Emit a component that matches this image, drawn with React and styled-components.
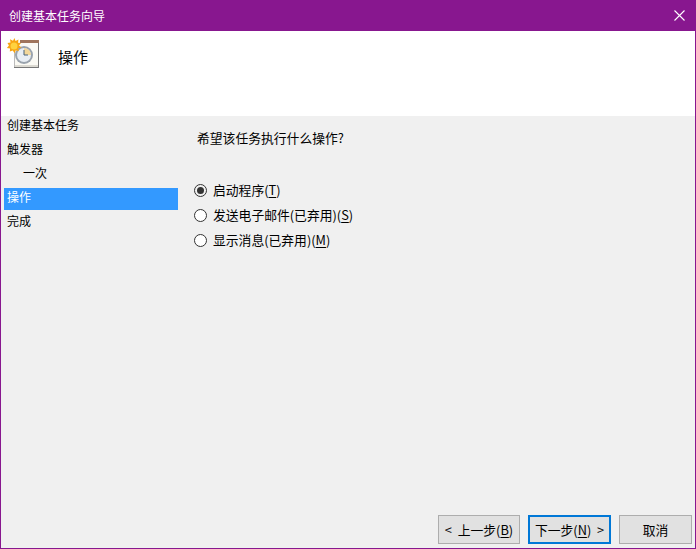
import React, { useState } from 'react';
import styled, { createGlobalStyle } from 'styled-components';

const GlobalStyle = createGlobalStyle`
  html, body {
    margin: 0;
    padding: 0;
    background: #f0f0f0;
  }
  * {
    box-sizing: border-box;
  }
`;

const Window = styled.div`
  display: flex;
  flex-direction: column;
  width: 696px;
  height: 549px;
  border: 1px solid #88178f;
  border-top: none;
  background: #f0f0f0;
  color: #000;
  font-family: 'Noto Sans CJK SC', 'Liberation Sans', sans-serif;
  font-size: 12px;
  overflow: hidden;
`;

const TitleBar = styled.div`
  display: flex;
  align-items: center;
  justify-content: space-between;
  flex: none;
  height: 31px;
  margin: 0 -1px;
  padding: 0 11px 1px 9px;
  background: #88178f;
  color: #fff;
`;

const CloseButton = styled.button`
  display: flex;
  padding: 0;
  border: none;
  background: none;
`;

const Header = styled.div`
  display: flex;
  align-items: flex-start;
  flex: none;
  height: 85px;
  padding: 7px 0 0 5px;
  background: #fff;
`;

const HeaderTitle = styled.div`
  margin: 8px 0 0 19px;
  font-size: 15px;
  line-height: 22px;
`;

const Content = styled.div`
  display: flex;
  flex: 1;
  min-height: 0;
`;

const Nav = styled.nav`
  display: flex;
  flex-direction: column;
  gap: 2px;
  flex: none;
  width: 177px;
  padding-left: 3px;
`;

const NavItem = styled.div`
  height: 22px;
  padding-left: ${(p) => (p.$indent ? 19 : 3)}px;
  background: ${(p) => (p.$active ? '#3399ff' : 'transparent')};
  color: ${(p) => (p.$active ? '#fff' : '#000')};
  line-height: 17px;
`;

const Main = styled.main`
  display: flex;
  flex-direction: column;
  flex: 1;
  min-width: 0;
  padding: 13px 3px 4px 16px;
  font-size: 12.8px;
`;

const Question = styled.div`
  margin-left: 3px;
  line-height: 18px;
`;

const RadioGroup = styled.div`
  display: flex;
  flex-direction: column;
  gap: 7px;
  margin-top: 33px;
`;

const RadioRow = styled.label`
  display: flex;
  align-items: center;
  gap: 6px;
  height: 18px;
`;

const RadioInput = styled.input`
  appearance: none;
  display: grid;
  place-items: center;
  flex: none;
  width: 13px;
  height: 13px;
  margin: 2px 0 0;
  border: 1px solid #333;
  border-radius: 50%;
  background: #fff;

  &:checked {
    background: #f0f0f0;
  }
  &:checked::before {
    content: '';
    width: 7px;
    height: 7px;
    border-radius: 50%;
    background: #333;
  }
`;

const Key = styled.span`
  text-decoration: underline;
  text-underline-offset: 2px;
`;

const Footer = styled.div`
  display: flex;
  justify-content: flex-end;
  margin-top: auto;
`;

const Button = styled.button`
  flex: none;
  width: ${(p) => p.$width}px;
  height: 29px;
  margin-left: ${(p) => p.$gap || 0}px;
  padding: 0;
  border: ${(p) => (p.$primary ? '2px solid #0078d7' : '1px solid #adadad')};
  background: #e1e1e1;
  color: #000;
  font: inherit;
  white-space: pre;
`;

const TaskIcon = () => (
  <svg width="33" height="32" viewBox="0 0 33 32">
    <path d="M8 3h25v25H8z" fill="#fbfaf4" />
    <path d="M14 2h19v3H14z" fill="#a0755c" />
    <path d="M32 5h1v25H8v-1h24z" fill="#777" />
    <path d="M8 5h1v24H8z" fill="#bbb" />
    <path d="M9 27h23v2H9z" fill="#dcdad2" />
    <circle cx="18" cy="17" r="9" fill="#9aa3ad" />
    <circle cx="18" cy="17" r="7" fill="#e8eef4" />
    <path d="M18 10a7 7 0 0 1 7 7h-7z" fill="#f2d79a" />
    <path d="M18 12v5h4" fill="none" stroke="#47627c" strokeWidth="1" />
    <path
      d="M8.500 0l1 3L12.500 1.500 12 4.700l3 .3-2 2.500 2.500 2-3.200.7.500 3-3-1-1.300 3-1.700-2.800-3 1.200.3-3.200-3.200-.3 2-2.500L1.500 5l3-.6L4 1.300l3 1.500z"
      fill="#f7a513"
    />
    <circle cx="8" cy="8" r="3.500" fill="#ffd23e" />
  </svg>
);

const CloseIcon = () => (
  <svg width="11" height="11" viewBox="0 0 11 11">
    <path d="M.5.500l10 10M10.500.500l-10 10" stroke="#fff" strokeWidth="1.100" fill="none" />
  </svg>
);

const navItems = [
  { label: '创建基本任务' },
  { label: '触发器' },
  { label: '一次', indent: true },
  { label: '操作', active: true },
  { label: '完成' },
];

const actions = [
  { id: 'start', label: '启动程序', key: 'T' },
  { id: 'mail', label: '发送电子邮件(已弃用)', key: 'S' },
  { id: 'message', label: '显示消息(已弃用)', key: 'M' },
];

const App = () => {
  const [action, setAction] = useState('start');

  return (
    <Window>
      <GlobalStyle />
      <TitleBar>
        <span>创建基本任务向导</span>
        <CloseButton type="button" aria-label="关闭">
          <CloseIcon />
        </CloseButton>
      </TitleBar>
      <Header>
        <TaskIcon />
        <HeaderTitle>操作</HeaderTitle>
      </Header>
      <Content>
        <Nav>
          {navItems.map((item) => (
            <NavItem key={item.label} $indent={item.indent} $active={item.active}>
              {item.label}
            </NavItem>
          ))}
        </Nav>
        <Main>
          <Question>希望该任务执行什么操作?</Question>
          <RadioGroup>
            {actions.map((a) => (
              <RadioRow key={a.id}>
                <RadioInput
                  type="radio"
                  name="action"
                  checked={action === a.id}
                  onChange={() => setAction(a.id)}
                />
                <span>
                  {a.label}(<Key>{a.key}</Key>)
                </span>
              </RadioRow>
            ))}
          </RadioGroup>
          <Footer>
            <Button type="button" $width={82}>
              {'<  上一步('}<Key>B</Key>)
            </Button>
            <Button type="button" $width={83} $gap={8} $primary>
              下一步(<Key>N</Key>{')  >'}
            </Button>
            <Button type="button" $width={73} $gap={8}>
              取消
            </Button>
          </Footer>
        </Main>
      </Content>
    </Window>
  );
};

export default App;
